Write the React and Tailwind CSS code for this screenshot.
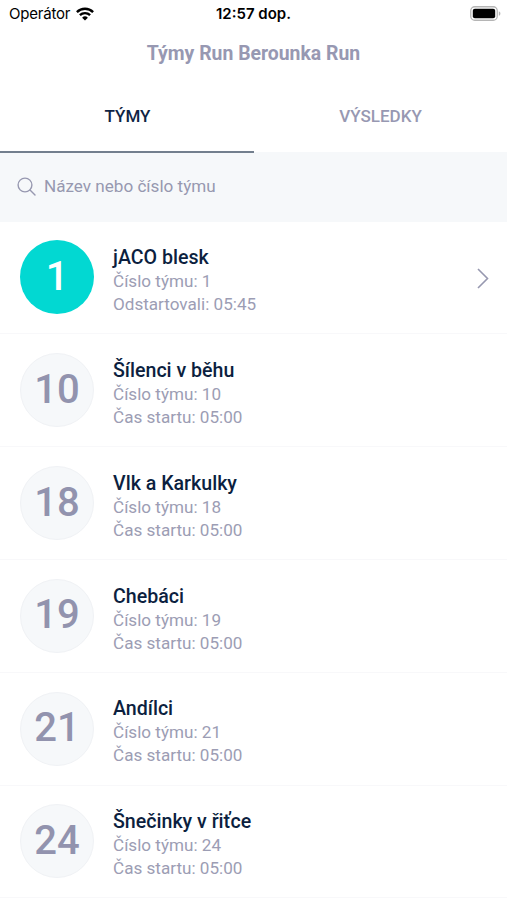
import React from 'react';

const teams = [
  { number: 1, name: 'jACO blesk', label: 'Odstartovali', time: '05:45', started: true },
  { number: 10, name: 'Šílenci v běhu', label: 'Čas startu', time: '05:00' },
  { number: 18, name: 'Vlk a Karkulky', label: 'Čas startu', time: '05:00' },
  { number: 19, name: 'Chebáci', label: 'Čas startu', time: '05:00' },
  { number: 21, name: 'Andílci', label: 'Čas startu', time: '05:00' },
  { number: 24, name: 'Šnečinky v řiťce', label: 'Čas startu', time: '05:00' }
];

function StatusBar() {
  return (
    <div className="grid grid-cols-3 items-center h-7 pt-px pl-[9px] pr-[6px] text-black font-['Inter',sans-serif] text-[15px]">
      <div className="flex items-center gap-[6px]">
        <span className="tracking-[-0.2px]">Operátor</span>
        <svg className="-mt-0.5" width="18" height="14" viewBox="0 0 18 14" fill="none" stroke="currentColor" strokeWidth="2.4">
          <path d="M0.9 5.1a11.6 11.6 0 0 1 16.2 0" />
          <path d="M3.9 8.2a7.3 7.3 0 0 1 10.2 0" />
          <path d="M9 13.6 6.1 10.7a4.2 4.2 0 0 1 5.8 0z" fill="currentColor" stroke="none" />
        </svg>
      </div>
      <div className="text-center font-semibold whitespace-nowrap -ml-[3px]">12:57 dop.</div>
      <div className="flex justify-end -mt-[3px]">
        <svg width="31" height="15" viewBox="0 0 31 15">
          <rect x="0.75" y="0.75" width="26.5" height="13.5" rx="4" fill="none" stroke="#b5b5b5" strokeWidth="1.3" />
          <rect x="2.8" y="2.8" width="22.4" height="9.4" rx="2" fill="#000" />
          <path d="M28.8 5.2v4.6c1-.4 1.6-1.3 1.6-2.3s-.6-1.9-1.6-2.3z" fill="#b5b5b5" />
        </svg>
      </div>
    </div>
  );
}

function Tabs() {
  return (
    <div className="relative z-10 flex h-[73px] text-[17px] font-medium">
      <button className="flex-1 border-b-2 border-[#737f8e] pt-0.5 pl-px text-[#0f2444]">TÝMY</button>
      <button className="flex-1 border-b-2 border-transparent pt-0.5 text-[#9798b2]">VÝSLEDKY</button>
    </div>
  );
}

function SearchBar() {
  return (
    <div className="-mt-px flex items-center gap-2 h-[69.6px] pl-[17px] bg-[#f6f8fa] text-[#9798b0]">
      <svg width="19" height="19" viewBox="0 0 19 19" fill="none" stroke="currentColor" strokeWidth="1.4" strokeLinecap="round">
        <circle cx="8" cy="8" r="6.9" />
        <path d="m13 13 5 5" />
      </svg>
      <span className="text-[17.1px]">Název nebo číslo týmu</span>
    </div>
  );
}

function TeamRow({ team }) {
  return (
    <div className="flex items-center h-[112.8px] pl-5 pr-[18px] border-b border-[#f8f8fa]">
      <div
        className={`flex items-center justify-center shrink-0 size-[74px] rounded-full text-[40px] font-medium leading-none pb-px ${
          team.started ? 'bg-[#02d8d2] text-white' : 'bg-[#f6f8fa] border border-[#f0f2f5] text-[#9293ae]'
        }`}
      >
        {team.number}
      </div>
      <div className="flex-1 ml-[19px] pt-[7.4px] text-[17.1px] leading-[23px] text-[#9c9db4]">
        <h2 className="text-[19.6px] leading-6 font-medium text-[#0c1f3f]">{team.name}</h2>
        <p>Číslo týmu: {team.number}</p>
        <p>{team.label}: {team.time}</p>
      </div>
      {team.started && (
        <svg className="mt-0.5" width="12" height="21" viewBox="0 0 12 21" fill="none" stroke="#9798b0" strokeWidth="1.6">
          <path d="m1 1 9.5 9.5L1 20" />
        </svg>
      )}
    </div>
  );
}

export default function App() {
  return (
    <div className="w-full h-[900px] overflow-hidden bg-white font-['Roboto',sans-serif]">
      <StatusBar />
      <header className="flex items-center justify-center h-[52px]">
        <h1 className="text-[19.4px] font-bold text-[#9798b2]">Týmy Run Berounka Run</h1>
      </header>
      <Tabs />
      <SearchBar />
      {teams.map(team => (
        <TeamRow key={team.number} team={team} />
      ))}
    </div>
  );
}
